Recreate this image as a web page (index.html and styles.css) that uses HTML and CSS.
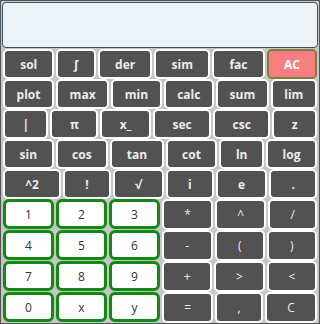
FILE: index.html
```html
<!DOCTYPE html>
<html>
<head>
<meta charset="utf-8">
<link rel="stylesheet" href="styles.css">
</head>
<body>
<div class="calc">
  <div class="display"></div>
  <div class="row">
    <button class="key">sol</button><button class="key">∫</button><button class="key">der</button><button class="key">sim</button><button class="key">fac</button><button class="key clear">AC</button>
  </div>
  <div class="row">
    <button class="key">plot</button><button class="key">max</button><button class="key">min</button><button class="key">calc</button><button class="key">sum</button><button class="key">lim</button>
  </div>
  <div class="row">
    <button class="key">|</button><button class="key">π</button><button class="key">x_</button><button class="key">sec</button><button class="key">csc</button><button class="key">z</button>
  </div>
  <div class="row">
    <button class="key">sin</button><button class="key">cos</button><button class="key">tan</button><button class="key">cot</button><button class="key">ln</button><button class="key">log</button>
  </div>
  <div class="row">
    <button class="key">^2</button><button class="key">!</button><button class="key">√</button><button class="key">i</button><button class="key">e</button><button class="key">.</button>
  </div>
  <div class="pad">
    <div class="nums">
      <div class="prow"><button class="num">1</button><button class="num">2</button><button class="num">3</button></div>
      <div class="prow"><button class="num">4</button><button class="num">5</button><button class="num">6</button></div>
      <div class="prow"><button class="num">7</button><button class="num">8</button><button class="num">9</button></div>
      <div class="prow"><button class="num">0</button><button class="num">x</button><button class="num">y</button></div>
    </div>
    <div class="ops">
      <div class="prow"><button class="key op">*</button><button class="key op">^</button><button class="key op">/</button></div>
      <div class="prow"><button class="key op">-</button><button class="key op">(</button><button class="key op">)</button></div>
      <div class="prow"><button class="key op">+</button><button class="key op">&gt;</button><button class="key op">&lt;</button></div>
      <div class="prow"><button class="key op">=</button><button class="key op">,</button><button class="key op">C</button></div>
    </div>
  </div>
</div>
</body>
</html>
```
FILE: styles.css
```css
html, body {
  margin: 0;
  padding: 0;
}
body {
  width: 320px;
  height: 324px;
  box-sizing: border-box;
  border: 1px solid #555;
  background: #c6c6c6;
  font-family: "Open Sans", sans-serif;
  overflow: hidden;
}
.calc {
  padding: 1px;
}
.display {
  height: 46px;
  box-sizing: border-box;
  border: 1px solid #2f5566;
  border-radius: 4px;
  background: #eef3f8;
  margin-bottom: 1px;
}
.row {
  display: flex;
  height: 30px;
}
.key {
  flex: 1 1 auto;
  margin: 0 1px;
  padding: 0;
  border: 2px solid #fff;
  border-radius: 5px;
  background: #525252;
  color: #ececec;
  font-family: "Open Sans", sans-serif;
  font-weight: bold;
  font-size: 12px;
  box-sizing: border-box;
}
.key.clear {
  background: #f77f7f;
  border-color: #7f7f3c;
  color: #fff;
}
.key.op {
  font-weight: normal;
}
.pad {
  display: flex;
}
.nums {
  width: 159px;
  display: flex;
  flex-direction: column;
}
.ops {
  flex: 1;
  display: flex;
  flex-direction: column;
}
.prow {
  display: flex;
  height: 31px;
}
.num {
  flex: 1 1 0;
  margin: 0 1px 1px 1px;
  padding: 0;
  border: 3px solid #128a12;
  border-radius: 6px;
  background: #fff;
  color: #333;
  font-family: "Open Sans", sans-serif;
  font-size: 12px;
  box-sizing: border-box;
}
.ops .key {
  margin: 0 1px;
}
```
